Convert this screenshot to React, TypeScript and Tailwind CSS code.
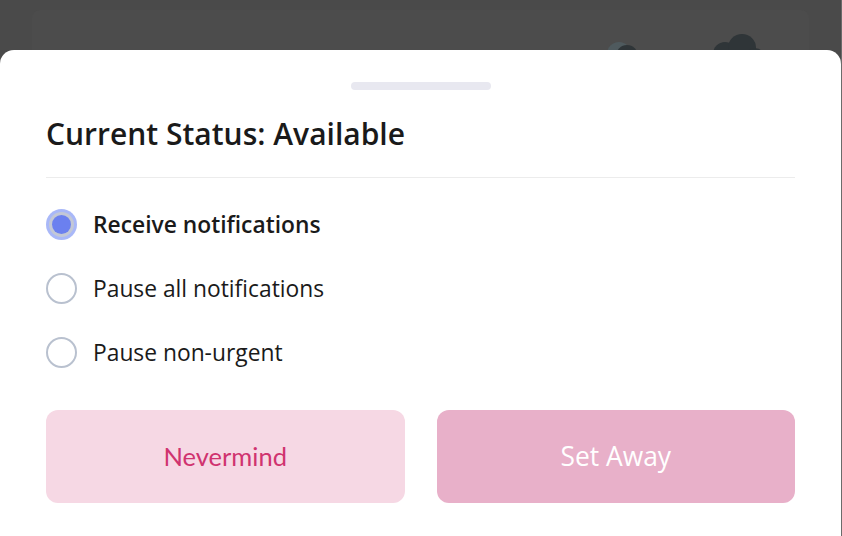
import { useState } from 'react';

const options = [
  { id: 'receive', label: 'Receive notifications' },
  { id: 'pause-all', label: 'Pause all notifications' },
  { id: 'pause-non-urgent', label: 'Pause non-urgent' },
];

function Radio({ checked }: { checked: boolean }) {
  if (checked) {
    return (
      <span className="w-[31px] h-[31px] rounded-full bg-[#a9b8f8] flex items-center justify-center">
        <span className="w-[25px] h-[25px] rounded-full bg-[#c3c8d6] flex items-center justify-center">
          <span className="w-[19px] h-[19px] rounded-full bg-[#6b80ef]" />
        </span>
      </span>
    );
  }
  return <span className="w-[31px] h-[31px] rounded-full border-2 border-[#b9c1cf] bg-white" />;
}

export default function App() {
  const [selected, setSelected] = useState('receive');

  return (
    <div className="relative h-[536px] w-[842px] overflow-hidden bg-[#4a4a4a] font-['Open_Sans',sans-serif]">
      {/* Page behind the sheet */}
      <div className="ml-[32px] mt-[10px] w-[777px] h-[200px] rounded-lg bg-[#4c4c4c] relative">
        <svg className="absolute left-[565px] top-[22px]" width="180" height="30" viewBox="0 0 180 30">
          <circle cx="22" cy="22" r="12" fill="#4f5a5e" />
          <circle cx="30" cy="24" r="11" fill="#2f3538" />
          <circle cx="12" cy="30" r="9" fill="#2f3538" />
          <rect x="80" y="24" width="2" height="8" fill="#a8862a" />
          <circle cx="128" cy="22" r="12" fill="#2f3538" />
          <circle cx="145" cy="16" r="14" fill="#2f3538" />
          <circle cx="158" cy="26" r="10" fill="#2f3538" />
          <rect x="144" y="18" width="2" height="14" fill="#a8862a" />
        </svg>
      </div>

      {/* Bottom sheet */}
      <div className="absolute left-0 top-[50px] bottom-0 w-[841px] bg-white rounded-t-[14px] px-[46px] flex flex-col">
        <div className="mt-[32px] mx-auto w-[140px] h-[8px] rounded-full bg-[#e8e8f0]" />
        <h2 className="mt-[26px] text-[30px] leading-[36px] font-semibold text-[#1a1a1a]">
          Current Status: Available
        </h2>
        <div className="mt-[25px] h-px bg-[#ececec]" />
        <div className="mt-[14px] flex flex-col">
          {options.map((o) => (
            <button
              key={o.id}
              onClick={() => setSelected(o.id)}
              className="h-[64px] flex items-center gap-[16px] text-left"
            >
              <Radio checked={selected === o.id} />
              <span
                className={`pt-[2px] text-[22.8px] text-[#1a1a1a] ${selected === o.id ? 'font-semibold' : 'font-normal'}`}
              >
                {o.label}
              </span>
            </button>
          ))}
        </div>
        <div className="mt-[26px] grid grid-cols-2 gap-[32px]">
          <button className="h-[93px] rounded-[12px] bg-[#f6d8e4] font-['Lato',sans-serif] text-[25.5px] text-[#d0336f]">
            Nevermind
          </button>
          <button className="h-[93px] rounded-[12px] bg-[#e8b0c9] text-[26.4px] text-white">
            Set Away
          </button>
        </div>
      </div>
      <div className="absolute right-0 top-0 bottom-0 w-px bg-[#6b6b6b]" />
    </div>
  );
}
